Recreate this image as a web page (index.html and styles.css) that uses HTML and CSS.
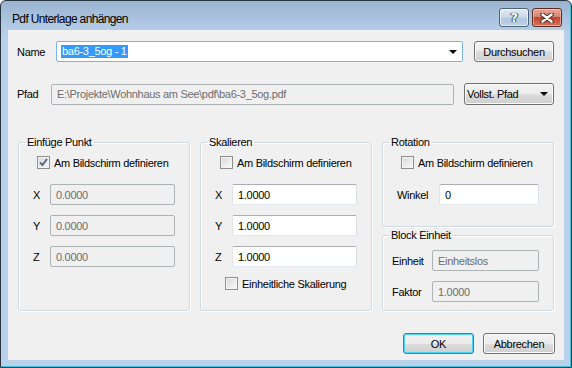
FILE: index.html
```html
<!DOCTYPE html>
<html lang="de">
<head>
    <meta charset="UTF-8">
    <title>Pdf Unterlage anhängen</title>
    <link rel="stylesheet" href="styles.css">
</head>
<body>

    <div class="window">
        <!-- Title bar -->
        <div class="titlebar">
            <span class="title">Pdf Unterlage anhängen</span>
            <div class="cap-buttons">
                <span class="cap help">?</span>
                <span class="cap close">
                    <svg width="14" height="10" viewBox="0 0 14 10">
                        <path d="M2.5 1.5 L11.5 8.5 M11.5 1.5 L2.5 8.5" stroke="#4a2a25" stroke-width="4.5" stroke-linecap="round"/>
                        <path d="M2.5 1.5 L11.5 8.5 M11.5 1.5 L2.5 8.5" stroke="#fff" stroke-width="2.5" stroke-linecap="round"/>
                    </svg>
                </span>
            </div>
        </div>

        <div class="client">
            <!-- Name -->
            <div class="row name-row">
                <label class="lbl name-lbl">Name</label>
                <div class="combo focused">
                    <span class="selected">ba6-3_5og - 1</span>
                    <span class="arrow"></span>
                </div>
                <span class="btn browse">Durchsuchen</span>
            </div>

            <!-- Pfad -->
            <div class="row path-row">
                <label class="lbl path-lbl">Pfad</label>
                <div class="tb off path-tb">E:\Projekte\Wohnhaus am See\pdf\ba6-3_5og.pdf</div>
                <span class="btn dropbtn">Vollst. Pfad <span class="arrow"></span></span>
            </div>

            <!-- Groups -->
            <div class="groups">
                <fieldset class="group tall">
                    <legend>Einfüge Punkt</legend>
                    <div class="check-row">
                        <span class="cb checked">
                            <svg width="11" height="11" viewBox="0 0 11 11"><path d="M2 5.5 L4.5 8 L9 2" fill="none" stroke="#56688f" stroke-width="2"/></svg>
                        </span>
                        Am Bildschirm definieren
                    </div>
                    <div class="fields">
                        <span class="flbl">X</span><div class="tb off">0.0000</div>
                        <span class="flbl">Y</span><div class="tb off">0.0000</div>
                        <span class="flbl">Z</span><div class="tb off">0.0000</div>
                    </div>
                </fieldset>

                <fieldset class="group tall">
                    <legend>Skalieren</legend>
                    <div class="check-row shift">
                        <span class="cb"></span>
                        Am Bildschirm definieren
                    </div>
                    <div class="fields">
                        <span class="flbl">X</span><div class="tb">1.0000</div>
                        <span class="flbl">Y</span><div class="tb">1.0000</div>
                        <span class="flbl">Z</span><div class="tb">1.0000</div>
                    </div>
                    <div class="check-row uniform">
                        <span class="cb"></span>
                        Einheitliche Skalierung
                    </div>
                </fieldset>

                <div class="stack">
                    <fieldset class="group rotation">
                        <legend>Rotation</legend>
                        <div class="check-row">
                            <span class="cb"></span>
                            Am Bildschirm definieren
                        </div>
                        <div class="fields wide">
                            <span class="flbl">Winkel</span><div class="tb">0</div>
                        </div>
                    </fieldset>

                    <fieldset class="group unit">
                        <legend>Block Einheit</legend>
                        <div class="fields unit-fields">
                            <span class="flbl">Einheit</span><div class="tb off">Einheitslos</div>
                            <span class="flbl">Faktor</span><div class="tb off">1.0000</div>
                        </div>
                    </fieldset>
                </div>
            </div>

            <!-- Dialog buttons -->
            <div class="actions">
                <span class="btn ok">OK</span>
                <span class="btn cancel">Abbrechen</span>
            </div>
        </div>
    </div>

</body>
</html>
```

FILE: styles.css
```css
/* Win7 style dialog */
* {
    box-sizing: border-box;
}

body {
    margin: 0;
    font-family: 'Liberation Sans', Arial, sans-serif;
    font-size: 11px;
    letter-spacing: -0.3px;
    color: #000;
    background: #fff;
}

.window {
    width: 572px;
    height: 368px;
    border: 1px solid #26333f;
    border-radius: 6px 6px 0 0;
    background: linear-gradient(#9ab3cf, #b4cce6 28px, #b9d1ea 40px);
    box-shadow: inset -1px -1px 0 #3cc4df;
    display: flex;
    flex-direction: column;
}

/* Title bar */
.titlebar {
    height: 29px;
    display: flex;
    align-items: flex-start;
    padding: 0 9px 0 11px;
}

.title {
    flex: 1;
    font-size: 12px;
    letter-spacing: -0.65px;
    line-height: 14px;
    margin-top: 11px;
    color: #000;
}

.cap-buttons {
    display: flex;
    gap: 3px;
    margin-top: 7px;
}

.cap {
    width: 30px;
    height: 19px;
    border: 1px solid #4f6377;
    border-radius: 3px;
    display: flex;
    align-items: center;
    justify-content: center;
}

.help {
    background: linear-gradient(#e3ebf4, #c9d7e8 50%, #b3c6dc 50%, #bdd0e6);
    box-shadow: inset 0 0 0 1px rgba(255, 255, 255, 0.6);
    color: #fff;
    font-family: 'DejaVu Sans', sans-serif;
    font-weight: bold;
    font-size: 13px;
    text-shadow: 0 0 1px #34465a, 0 0 1px #34465a, 1px 0 0 #34465a, -1px 0 0 #34465a;
}

.close {
    border-color: #5b2b23;
    background: linear-gradient(#e8a798, #d68473 45%, #c4452e 50%, #d5745a);
    box-shadow: inset 0 0 0 1px rgba(255, 220, 210, 0.5);
}

/* Client area */
.client {
    height: 330px;
    margin: 0 7px;
    background: #f0f0f0;
    padding: 0 9px;
}

.row {
    display: flex;
    align-items: center;
}

.name-row {
    height: 21px;
    margin-top: 11px;
}

.path-row {
    height: 22px;
    margin-top: 21px;
}

.name-lbl {
    width: 39px;
}

.path-lbl {
    width: 34px;
}

.combo {
    width: 407px;
    height: 21px;
    background: #fff;
    border: 1px solid #7eb4ea;
    border-radius: 2px;
    display: flex;
    align-items: center;
    padding-left: 4px;
    position: relative;
}

.selected {
    background: #3399ff;
    color: #fff;
    line-height: 13px;
    padding: 0 1px;
}

.arrow {
    width: 0;
    height: 0;
    border-left: 4px solid transparent;
    border-right: 4px solid transparent;
    border-top: 4px solid #000;
}

.combo .arrow {
    margin-left: auto;
    margin-right: 5px;
}

/* Text boxes */
.tb {
    height: 21px;
    background: #fff;
    border: 1px solid;
    border-color: #abadb3 #dbdfe6 #e3e9ef #e2e3ea;
    border-radius: 2px;
    display: flex;
    align-items: center;
    padding-left: 5px;
    white-space: nowrap;
    overflow: hidden;
}

.tb.off {
    background: #f0f0f0;
    border-color: #adb2b5;
    color: #6d6d6d;
}

.path-tb {
    width: 403px;
}

/* Buttons */
.btn {
    height: 21px;
    border: 1px solid #707070;
    border-radius: 3px;
    background: linear-gradient(#f2f2f2, #ebebeb 50%, #dddddd 50%, #cfcfcf);
    box-shadow: inset 0 0 0 1px #fcfcfc;
    display: flex;
    align-items: center;
    justify-content: center;
}

.browse {
    width: 80px;
    margin-left: 11px;
}

.dropbtn {
    width: 90px;
    height: 22px;
    margin-left: 10px;
    justify-content: space-between;
    padding: 0 5px 0 2px;
}

/* Group boxes */
.groups {
    display: grid;
    grid-template-columns: 172px 172px 172px;
    column-gap: 10px;
    margin: 31px 0 0 1px;
}

.group {
    margin: 0;
    padding: 0;
    min-width: 0;
    border: 1px solid #d0dae2;
    border-radius: 3px;
    box-shadow: inset 1px 1px 0 #fff, 1px 1px 0 #fff;
}

.group legend {
    padding: 0 2px;
    margin-left: 6px;
    line-height: 13px;
}

.tall {
    height: 175px;
}

.stack {
    display: flex;
    flex-direction: column;
    gap: 2px;
}

.rotation {
    height: 91px;
}

.unit {
    height: 82px;
}

.check-row {
    display: flex;
    align-items: center;
    gap: 4px;
    height: 13px;
    margin: 7px 0 0 18px;
}

.check-row.shift {
    margin-left: 19px;
}

.check-row.uniform {
    margin: 10px 0 0 24px;
}

.cb {
    width: 13px;
    height: 13px;
    border: 1px solid #8e8f8f;
    background: linear-gradient(135deg, #d6d6d6, #fbfbfb);
    box-shadow: inset 0 0 0 1px #f4f4f4;
    display: flex;
    align-items: center;
    justify-content: center;
}

.fields {
    display: grid;
    grid-template-columns: 31px 125px;
    row-gap: 10px;
    align-items: center;
    margin-top: 15px;
}

.fields.wide {
    grid-template-columns: 56px 100px;
}

.unit-fields {
    grid-template-columns: 49px 107px;
    margin-top: 8px;
}

.flbl {
    padding-left: 14px;
}

.unit-fields .flbl {
    padding-left: 9px;
}

/* Dialog buttons */
.actions {
    display: flex;
    justify-content: flex-end;
    gap: 9px;
    margin-top: 22px;
}

.ok {
    width: 71px;
    border-color: #3c7fb1;
    box-shadow: inset 0 0 0 1px #48d3f9;
}

.cancel {
    width: 72px;
}
```
